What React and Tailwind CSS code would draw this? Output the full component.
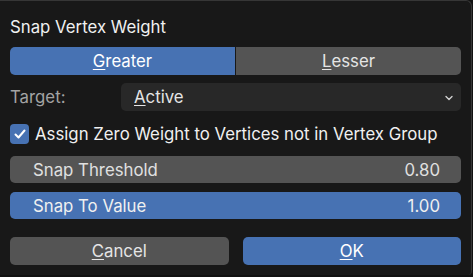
import React from "react";

const U = ({ children }) => <span className="underline decoration-1 underline-offset-[2px]">{children}</span>;

export default function App() {
  return (
    <div className="w-[473px] h-[277px] bg-[#111111] overflow-hidden" style={{ fontFamily: "Inter, 'Noto Sans', sans-serif" }}>
      <div className="w-[472px] h-[275px] bg-[#181818] border-t border-r border-[#363636] rounded-tr-[6px] rounded-br-[4px] px-[10px] pt-[16px] flex flex-col text-[#e5e5e5]">
        <div className="text-[16.8px] leading-[20px] h-[20px] text-[#f0f0f0]">Snap Vertex Weight</div>
        <div className="mt-[10px] flex h-[28px] gap-[1px] text-[16.8px]">
          <div className="flex-1 bg-[#4772b3] rounded-l-[5px] flex items-center justify-center pt-[2px] text-white"><span><U>G</U>reater</span></div>
          <div className="flex-1 bg-[#545454] rounded-r-[5px] flex items-center justify-center pt-[2px] text-[#e5e5e5]"><span><U>L</U>esser</span></div>
        </div>
        <div className="mt-[8px] flex h-[28px] items-center pt-[2px] text-[16.8px]">
          <div className="w-[111px] text-[#a3a3a3]">Target:</div>
          <div className="flex-1 h-[28px] -mt-[2px] bg-[#282828] rounded-[5px] flex items-center pt-[2px] pl-[13px] pr-[6px] text-[#e5e5e5]">
            <span className="flex-1"><U>A</U>ctive</span>
            <svg width="10" height="10" viewBox="0 0 10 10" className="mr-[1px] -mt-[1px]"><path d="M2 3.5 L5 6.5 L8 3.5" fill="none" stroke="#d0d0d0" strokeWidth="1.4" strokeLinecap="round" strokeLinejoin="round" /></svg>
          </div>
        </div>
        <div className="mt-[12px] flex items-center h-[22px]">
          <div className="w-[19px] h-[20px] bg-[#4772b3] rounded-[4px] flex items-center justify-center">
            <svg width="14" height="14" viewBox="0 0 14 14"><path d="M2.5 7.5 L5.5 10.5 L11.5 3.5" fill="none" stroke="#ffffff" strokeWidth="2" strokeLinecap="round" strokeLinejoin="round" /></svg>
          </div>
          <span className="ml-[6px] pt-[2px] text-[16.8px] text-[#f0f0f0]">Assign Zero Weight to Vertices not in Vertex Group</span>
        </div>
        <div className="mt-[11px] h-[27px] bg-[#545454] rounded-[5px] flex items-center justify-between pt-[2px] pl-[23px] pr-[21px] text-[16.8px] text-[#e0e0e0]">
          <span>Snap Threshold</span><span>0.80</span>
        </div>
        <div className="mt-[9px] h-[27px] bg-[#4772b3] rounded-[5px] flex items-center justify-between pt-[2px] pl-[23px] pr-[21px] text-[16.8px] text-[#f0f0f0]">
          <span>Snap To Value</span><span>1.00</span>
        </div>
        <div className="mt-[18px] flex h-[28px] gap-[14px] text-[16.8px]">
          <div className="flex-1 bg-[#545454] rounded-[5px] flex items-center justify-center pt-[2px] text-[#e5e5e5]"><span><U>C</U>ancel</span></div>
          <div className="flex-1 bg-[#4772b3] rounded-[5px] flex items-center justify-center pt-[2px] text-white"><span><U>O</U>K</span></div>
        </div>
      </div>
    </div>
  );
}
